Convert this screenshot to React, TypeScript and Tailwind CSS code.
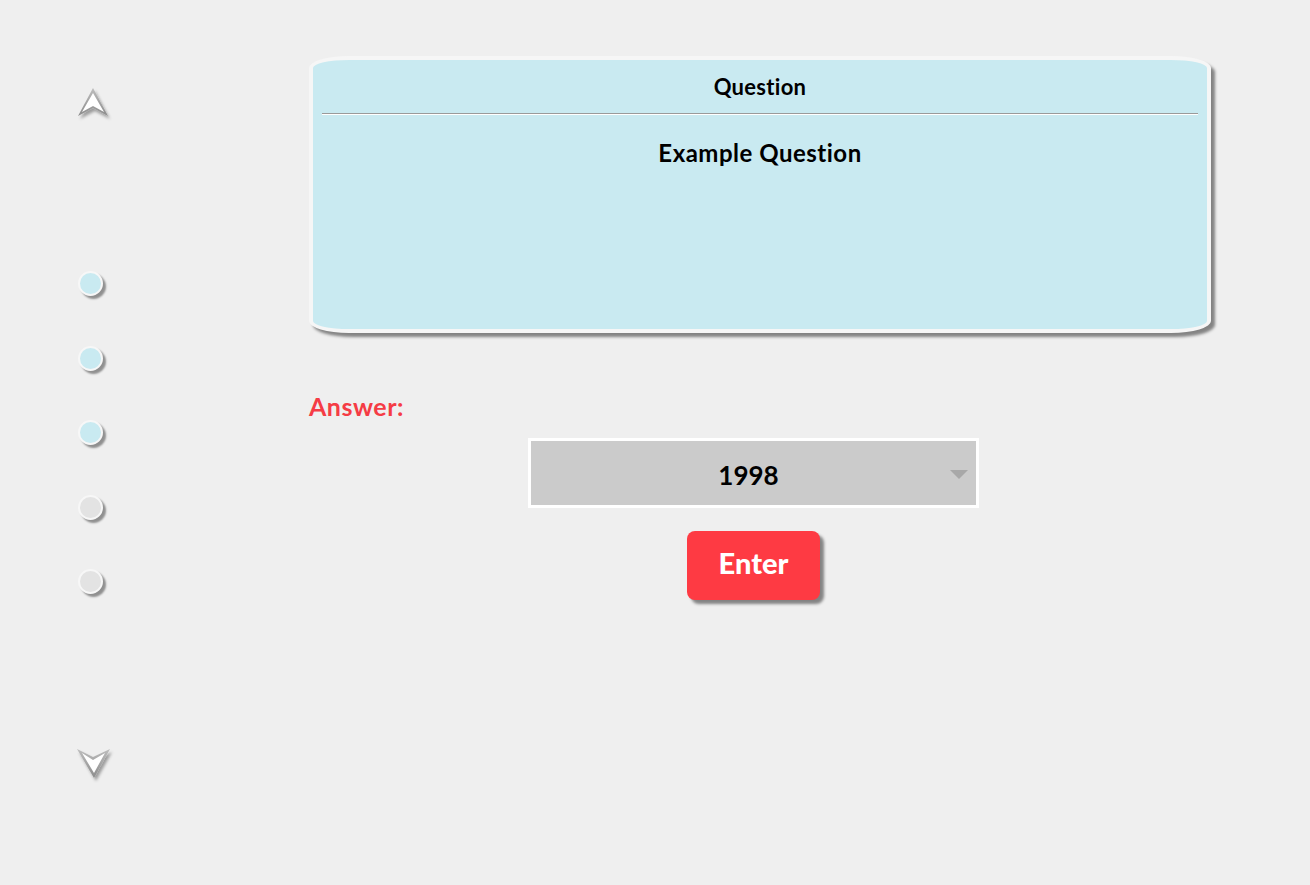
import React from "react";

function UpArrow() {
  return (
    <svg width="40" height="36" viewBox="0 0 40 36" className="block">
      <defs>
        <filter id="ds1" x="-30%" y="-30%" width="160%" height="160%">
          <feDropShadow dx="2" dy="3" stdDeviation="1.5" floodColor="#000" floodOpacity="0.35" />
        </filter>
        <linearGradient id="ug" x1="0" y1="0" x2="0" y2="1">
          <stop offset="0" stopColor="#bdbdbd" />
          <stop offset="1" stopColor="#8c8c8c" />
        </linearGradient>
      </defs>
      <polygon points="17,2 2,30 17,22 32,30" fill="url(#ug)" filter="url(#ds1)" />
      <polygon points="17,7 6,26 17,20 28,26" fill="#ffffff" />
    </svg>
  );
}

function DownArrow() {
  return (
    <svg width="40" height="36" viewBox="0 0 40 36" className="block">
      <defs>
        <filter id="ds2" x="-30%" y="-30%" width="160%" height="160%">
          <feDropShadow dx="2" dy="3" stdDeviation="1.5" floodColor="#000" floodOpacity="0.35" />
        </filter>
        <linearGradient id="dg" x1="0" y1="0" x2="0" y2="1">
          <stop offset="0" stopColor="#bdbdbd" />
          <stop offset="1" stopColor="#8c8c8c" />
        </linearGradient>
      </defs>
      <polygon points="1,2 17,10 34,2 18,31" fill="url(#dg)" filter="url(#ds2)" />
      <polygon points="6,6 17,13 29,6 18,26" fill="#ffffff" />
    </svg>
  );
}

function Dot({ active }: { active: boolean }) {
  return (
    <div
      className={`w-[25px] h-[25px] rounded-full border-2 border-[#f7f7f7] shadow-[3px_3px_2px_rgba(0,0,0,0.4)] ${
        active ? "bg-[#c9eaf1]" : "bg-[#e3e3e3]"
      }`}
    />
  );
}

export default function App() {
  return (
    <div
      className="w-[1310px] h-[885px] bg-[#efefef] flex"
      style={{ fontFamily: "'Lato', 'Noto Sans', sans-serif" }}
    >
      {/* Sidebar */}
      <div className="w-[309px] shrink-0 flex flex-col pl-[76px]">
        <div className="mt-[86px]">
          <UpArrow />
        </div>
        <div className="mt-[149px] flex flex-col gap-[49.5px] pl-[2px]">
          <Dot active />
          <Dot active />
          <Dot active />
          <Dot active={false} />
          <Dot active={false} />
        </div>
        <div className="mt-[153px]">
          <DownArrow />
        </div>
      </div>

      {/* Main */}
      <div className="w-[902px] shrink-0 flex flex-col pt-[56px]">
        <div className="h-[277px] border-4 border-[#f6f6f6] bg-[#c9eaf1] rounded-[40px/12px] shadow-[4px_4px_3px_rgba(0,0,0,0.45)] px-[9px] pt-[12px] flex flex-col">
          <div className="text-center text-[22px] font-bold text-black leading-[30px] pb-[11px] tracking-[0.3px]">
            Question
          </div>
          <div className="border-t border-[#9a9a9a] border-b border-b-white" />
          <div className="text-center text-[24px] font-bold text-black mt-[23px] leading-[30px] tracking-[0.5px]">
            Example Question
          </div>
        </div>

        <div className="mt-[58px] text-[25px] font-bold text-[#f53c45] leading-[30px] tracking-[0.5px]">
          Answer:
        </div>

        <div className="flex flex-col items-center mt-[17px] pr-[13px]">
          <div className="w-[451px] h-[70px] border-[3px] border-white bg-[#cbcbcb] relative flex items-center justify-center">
            <span className="text-[26px] font-bold text-black -ml-[10px] mt-[5px]">1998</span>
            <svg width="18" height="10" viewBox="0 0 18 10" className="absolute right-[8px] top-[29px]">
              <polygon points="0,0 18,0 9,9" fill="#a8a8a8" />
            </svg>
          </div>
          <button className="mt-[23px] w-[133px] h-[69px] rounded-[8px] bg-[#fe3a43] text-white text-[29px] font-black shadow-[4px_4px_3px_rgba(0,0,0,0.45)] ml-[0px] pb-[6px]">
            Enter
          </button>
        </div>
      </div>
    </div>
  );
}
